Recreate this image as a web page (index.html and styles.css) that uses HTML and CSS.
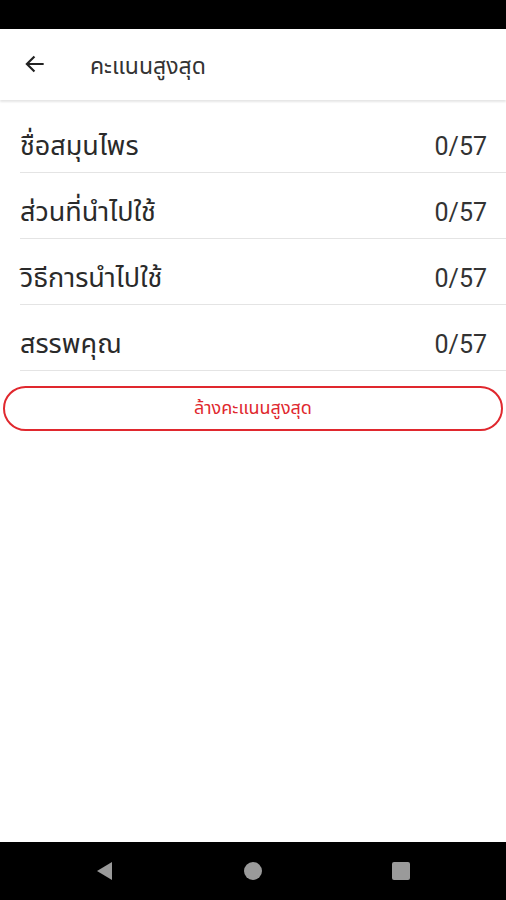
FILE: index.html
```html
<!DOCTYPE html>
<html lang="th">
<head>
  <meta charset="utf-8">
  <title>คะแนนสูงสุด</title>
  <link rel="stylesheet" href="styles.css">
</head>
<body>

<div class="status"></div>

<header class="appbar">
  <button class="back" aria-label="back">
    <svg viewBox="0 0 24 24" width="26" height="26">
      <path d="M20 12H4.5M11.5 5l-7 7 7 7" fill="none" stroke="#222" stroke-width="2"/>
    </svg>
  </button>
  <h1 class="title">คะแนนสูงสุด</h1>
</header>

<main class="content">
  <ul class="scores">
    <li class="row"><span class="name">ชื่อสมุนไพร</span><span class="score">0/57</span></li>
    <li class="row"><span class="name">ส่วนที่นำไปใช้</span><span class="score">0/57</span></li>
    <li class="row"><span class="name">วิธีการนำไปใช้</span><span class="score">0/57</span></li>
    <li class="row"><span class="name">สรรพคุณ</span><span class="score">0/57</span></li>
  </ul>

  <button class="clear">ล้างคะแนนสูงสุด</button>
</main>

<nav class="navbar">
  <svg viewBox="0 0 20 20" width="20" height="20"><path d="M17 1v18L2 10z" fill="#9a9a9a"/></svg>
  <svg viewBox="0 0 20 20" width="20" height="20"><circle cx="10" cy="10" r="9" fill="#9a9a9a"/></svg>
  <svg viewBox="0 0 20 20" width="20" height="20"><rect x="1" y="1" width="18" height="18" rx="2" fill="#9a9a9a"/></svg>
</nav>

</body>
</html>
```

FILE: styles.css
```css
:root { --line:#e4e4e4; --red:#e0282e; --text:#2a2a2a; }
*{box-sizing:border-box}
body{margin:0;height:900px;display:flex;flex-direction:column;background:#fff;
     font-family:"Noto Sans Thai","Noto Sans Thai UI",Loma,Garuda,"Noto Sans",sans-serif;color:var(--text)}
.status{height:29px;background:#000;flex:none}
.appbar{height:71px;flex:none;display:flex;align-items:center;background:#fff;
        box-shadow:0 2px 2px #0000001a;position:relative;z-index:1}
.back{border:none;background:none;padding:0;margin:0 0 2px 22px;width:26px;height:26px;display:grid;place-content:center}
.title{margin:6px 0 0 42px;font-size:23px;font-weight:400;color:#333;line-height:1}
.content{flex:1;padding-top:7px}
.scores{list-style:none;margin:0;padding:0 0 0 20px}
.row{height:66px;display:flex;align-items:center;justify-content:space-between;
     border-bottom:1px solid var(--line);padding:13px 19px 0 0;font-size:27px}
.score{font-family:Roboto,"Noto Sans",sans-serif;color:#333;font-size:25px}
.clear{display:block;width:calc(100% - 6px);height:45px;margin:15px 3px 0;
       border:2px solid var(--red);border-radius:23px;background:#fff;
       color:var(--red);font:18px "Noto Sans Thai",Loma,Garuda,"Noto Sans",sans-serif}
.navbar{height:58px;flex:none;background:#000;display:flex;align-items:center;
        justify-content:center;gap:128px}
```
